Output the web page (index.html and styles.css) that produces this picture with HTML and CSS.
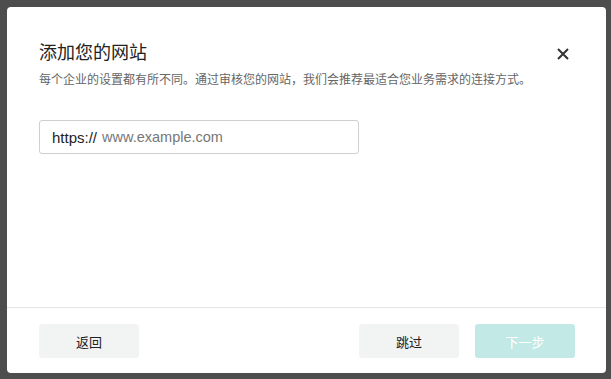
FILE: index.html
```html
<html>
    <head>
        <title>添加您的网站</title>
        <meta name="viewport" content="width=device-width, initial-scale=1.0">
        <link rel="stylesheet" href="styles.css">
    </head>
    <body>
    <div class="dialog">
        <div class="dialog-body">
            <div class="dialog-head">
                <h1 class="dialog-title">添加您的网站</h1>
                <button class="btn-close" aria-label="关闭">
                    <svg width="14" height="14" viewBox="0 0 14 14">
                        <path d="M2 2 L12 12 M12 2 L2 12" stroke="#333" stroke-width="2" fill="none"/>
                    </svg>
                </button>
            </div>
            <p class="dialog-sub">每个企业的设置都有所不同。通过审核您的网站，我们会推荐最适合您业务需求的连接方式。</p>

            <div class="url-field">
                <span class="url-prefix">https://</span>
                <input class="url-input" type="text" placeholder="www.example.com">
            </div>
        </div>

        <div class="dialog-foot">
            <button class="btn">返回</button>
            <div class="foot-right">
                <button class="btn">跳过</button>
                <button class="btn btn-primary">下一步</button>
            </div>
        </div>
    </div>
    </body>
</html>
```

FILE: styles.css
```css
html, body{
    height: 100%;
}

body{
    margin: 0;
    padding: 7px 5px 6px 7px;
    box-sizing: border-box;
    background-color: #4d4d4d;
    font-family: "Liberation Sans", "Noto Sans CJK SC", sans-serif;
    color: #333;
}

.dialog{
    height: 100%;
    background-color: #fff;
    border-radius: 4px;
    display: flex;
    flex-direction: column;
}

.dialog-body{
    flex: 1;
    padding: 33px 36px 0 32px;
}

.dialog-head{
    display: flex;
    justify-content: space-between;
    align-items: center;
}

.dialog-title{
    margin: 0;
    font-size: 18px;
    font-weight: normal;
    line-height: 26px;
    color: #222;
}

.btn-close{
    border: none;
    background: none;
    padding: 0;
    width: 14px;
    height: 14px;
    margin-top: 2px;
    cursor: pointer;
}

.dialog-sub{
    margin: 5px 0 0 0;
    font-size: 12px;
    line-height: 18px;
    color: #666;
}

.url-field{
    margin-top: 31px;
    width: 320px;
    height: 34px;
    box-sizing: border-box;
    border: 1px solid #cfcfcf;
    border-radius: 3px;
    display: flex;
    align-items: center;
    padding-left: 12px;
}

.url-prefix{
    color: #222;
    font-size: 15px;
    margin-right: 5px;
}

.url-input{
    flex: 1;
    border: none;
    outline: none;
    padding: 0;
    font-family: inherit;
    font-size: 14.5px;
    color: #333;
}

.url-input::placeholder{
    color: #777;
}

.dialog-foot{
    border-top: 1px solid #e6e6e6;
    padding: 16px 31px 15px 32px;
    display: flex;
    justify-content: space-between;
}

.foot-right{
    display: flex;
    gap: 16px;
}

.btn{
    width: 100px;
    height: 34px;
    border: none;
    border-radius: 3px;
    background-color: #f2f3f3;
    color: #222;
    font-family: inherit;
    font-size: 13px;
    cursor: pointer;
}

.btn-primary{
    background-color: #c3e9e6;
    color: #fff;
}
```
